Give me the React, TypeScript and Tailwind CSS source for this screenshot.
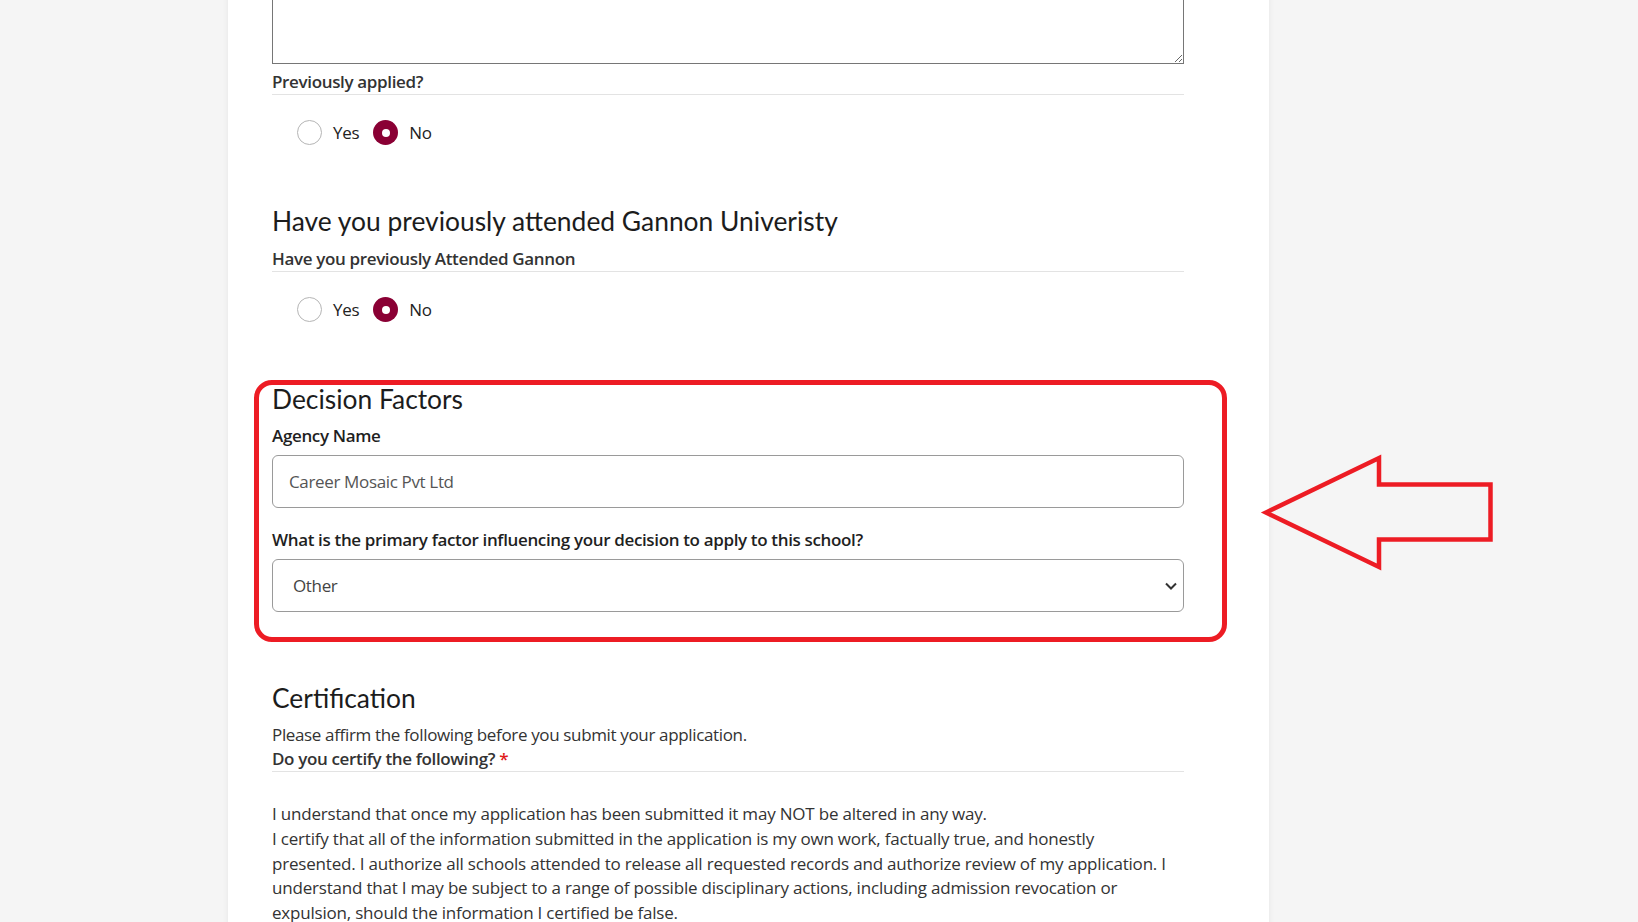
import React from 'react';

const body = { fontFamily: '"Open Sans", "Liberation Sans", sans-serif' };
const head = { fontFamily: 'Lato, "Open Sans", sans-serif' };

function Radio({ checked }: { checked?: boolean }) {
  if (checked) {
    return (
      <span className="flex h-[25px] w-[25px] items-center justify-center rounded-full bg-[#8a0034]">
        <span className="h-[8px] w-[8px] rounded-full bg-white" />
      </span>
    );
  }
  return <span className="block h-[25px] w-[25px] rounded-full border border-[#b5b5b5] bg-white" />;
}

function YesNo() {
  return (
    <div className="flex h-[25px] items-center pl-[25px] text-[17px] tracking-[-0.3px] text-[#222]">
      <Radio />
      <span className="ml-[11px] mr-[14px]">Yes</span>
      <Radio checked />
      <span className="ml-[11px]">No</span>
    </div>
  );
}

export default function App() {
  return (
    <div className="relative h-[922px] overflow-hidden bg-[#f5f5f5]" style={body}>
      <div className="ml-[228px] min-h-[922px] w-[1041px] bg-white pl-[44px] shadow-[0_0_6px_rgba(0,0,0,0.07)]">
        <div className="w-[912px] text-[17px] tracking-[-0.35px]">
          <textarea
            className="-mt-[46px] block h-[110px] w-full border border-[#767676] bg-white"
            readOnly
          />
          <div className="mt-[5px] border-b border-[#e3e3e3] font-semibold leading-[25px] text-[#333]">
            Previously applied?
          </div>
          <div className="mt-[25px]">
            <YesNo />
          </div>

          <h2 className="mt-[62px] text-[26.4px] leading-[29px] tracking-normal text-[#1c1c1c]" style={head}>
            Have you previously attended Gannon Univeristy
          </h2>
          <div className="mt-[10px] border-b border-[#e3e3e3] font-semibold leading-[25px] text-[#333]">
            Have you previously Attended Gannon
          </div>
          <div className="mt-[25px]">
            <YesNo />
          </div>

          <section className="-ml-[18px] -mr-[43px] mt-[58px] rounded-[18px] border-[5px] border-[#ed1c24] pb-[25px] pl-[13px] pr-[38px]">
            <h2 className="text-[26.4px] leading-[29px] tracking-normal text-[#1c1c1c]" style={head}>
              Decision Factors
            </h2>
            <div className="mt-[9px] font-semibold leading-[25px] text-[#1f1f1f]">Agency Name</div>
            <div className="mt-[7px] flex h-[53px] items-center rounded-[6px] border border-[#9a9a9a] pl-[16px] text-[#555]">
              Career Mosaic Pvt Ltd
            </div>
            <div className="mt-[19px] font-semibold leading-[25px] text-[#1f1f1f]">
              What is the primary factor influencing your decision to apply to this school?
            </div>
            <div className="relative mt-[7px] flex h-[53px] items-center rounded-[6px] border border-[#9a9a9a] pl-[20px] text-[#444]">
              Other
              <svg
                className="absolute right-[6px] top-[22px]"
                width="12"
                height="8"
                viewBox="0 0 12 8"
                fill="none"
                stroke="#333"
                strokeWidth="2"
              >
                <path d="M1 1.5l5 5 5-5" />
              </svg>
            </div>
          </section>

          <h2 className="mt-[42px] text-[26.4px] leading-[29px] tracking-normal text-[#1c1c1c]" style={head}>
            Certification
          </h2>
          <p className="mt-[11px] leading-[22px] text-[#333]">
            Please affirm the following before you submit your application.
          </p>
          <div className="border-b border-[#e3e3e3] font-semibold leading-[25px] text-[#333]">
            Do you certify the following? <span className="text-[#e01b1b]">*</span>
          </div>
          <p className="mt-[30px] leading-[24.8px] tracking-[-0.2px] text-[#333]">
            I understand that once my application has been submitted it may NOT be altered in any way.
            <br />
            I certify that all of the information submitted in the application is my own work, factually
            true, and honestly
            <br />
            presented. I authorize all schools attended to release all requested records and authorize
            review of my application. I
            <br />
            understand that I may be subject to a range of possible disciplinary actions, including
            admission revocation or
            <br />
            expulsion, should the information I certified be false.
          </p>
        </div>
      </div>

      <svg
        className="absolute left-[1260px] top-[452px]"
        width="236"
        height="122"
        viewBox="0 0 236 122"
        fill="none"
        stroke="#ed1c24"
        strokeWidth="4.5"
        strokeLinejoin="miter"
      >
        <path d="M6 60.5L119 6V32.5H230.5V87.5H119V115Z" />
      </svg>
    </div>
  );
}
